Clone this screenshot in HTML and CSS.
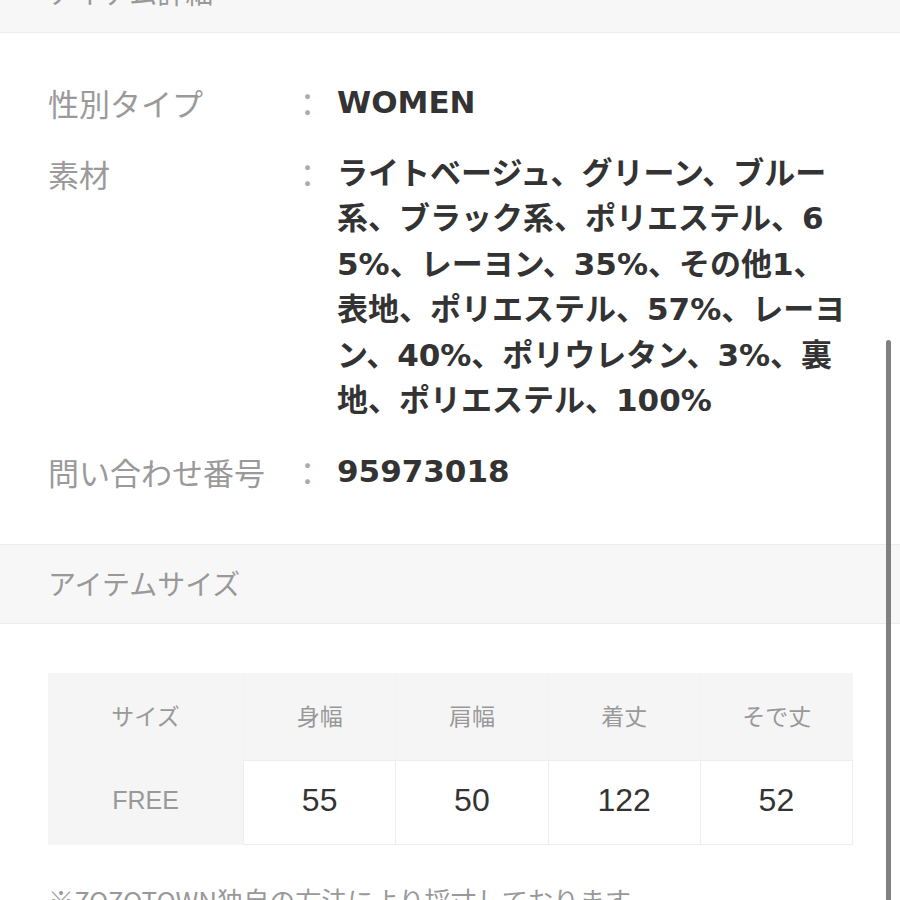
FILE: index.html
```html
<!DOCTYPE html>
<html lang="ja">
<head>
  <meta charset="UTF-8">
  <title>アイテム詳細</title>
  <link rel="stylesheet" href="styles.css">
</head>
<body>
  <div class="section-head section-head-top">アイテム詳細</div>

  <div class="spec-list">
    <div class="spec-row">
      <div class="spec-label">性別タイプ</div>
      <div class="spec-colon">：</div>
      <div class="spec-value">WOMEN</div>
    </div>
    <div class="spec-row">
      <div class="spec-label">素材</div>
      <div class="spec-colon">：</div>
      <div class="spec-value">ライトベージュ、グリーン、ブルー<br>系、ブラック系、ポリエステル、6<br>5%、レーヨン、35%、その他1、<br>表地、ポリエステル、57%、レーヨ<br>ン、40%、ポリウレタン、3%、裏<br>地、ポリエステル、100%</div>
    </div>
    <div class="spec-row">
      <div class="spec-label">問い合わせ番号</div>
      <div class="spec-colon">：</div>
      <div class="spec-value">95973018</div>
    </div>
  </div>

  <div class="section-head">アイテムサイズ</div>

  <div class="size-wrap">
    <table class="size-table">
      <thead>
        <tr>
          <th class="size-name">サイズ</th>
          <th>身幅</th>
          <th>肩幅</th>
          <th>着丈</th>
          <th>そで丈</th>
        </tr>
      </thead>
      <tbody>
        <tr>
          <th class="size-name">FREE</th>
          <td>55</td>
          <td>50</td>
          <td>122</td>
          <td>52</td>
        </tr>
      </tbody>
    </table>

    <p class="size-note">※ZOZOTOWN独自の方法により採寸しております。</p>
  </div>

  <!-- scroll indicator drawn over the page -->
  <div class="scroll-thumb"></div>
</body>
</html>
```

FILE: styles.css
```css
body {
  margin: 0;
  font-family: "Noto Sans CJK JP", sans-serif;
  color: #333;
  background: #fff;
  overflow: hidden;
}

/* grey section bars */
.section-head {
  box-sizing: border-box;
  height: 80px;
  display: flex;
  align-items: center;
  padding-left: 48px;
  padding-bottom: 2px;
  background: #f7f7f7;
  border-top: 1px solid #ececec;
  border-bottom: 1px solid #ececec;
  font-size: 28px;
  color: #999;
}

.section-head-top {
  margin-top: -47px;
}

/* item detail rows */
.spec-list {
  display: flex;
  flex-direction: column;
  gap: 25px;
  padding: 47px 47px 50px 48px;
}

.spec-row {
  display: grid;
  grid-template-columns: 244px 45px 1fr;
  line-height: 45.5px;
  font-size: 31px;
}

.spec-label {
  color: #9a9a9a;
  white-space: nowrap;
}

.spec-colon {
  color: #aaa;
}

.spec-value {
  font-family: "DejaVu Sans", "Noto Sans CJK JP", sans-serif;
  font-weight: bold;
  color: #333;
  white-space: nowrap;
}

/* size table */
.size-wrap {
  padding: 49px 47px 0 48px;
}

.size-table {
  width: 100%;
  border-collapse: collapse;
  table-layout: fixed;
}

.size-table th,
.size-table td {
  text-align: center;
  padding: 0 0 4px;
}

.size-table thead th {
  height: 83px;
  background: #f5f5f5;
  border-left: 1px solid #f1f1f1;
  font-size: 23px;
  font-weight: normal;
  color: #999;
}

.size-table thead th:first-child {
  border-left: none;
}

.size-table .size-name {
  width: 195px;
}

.size-table tbody th {
  height: 80px;
  background: #f5f5f5;
  font-family: "Liberation Sans", sans-serif;
  font-size: 25px;
  font-weight: normal;
  color: #999;
}

.size-table td {
  background: #fff;
  border: 1px solid #eee;
  font-family: "Liberation Sans", sans-serif;
  font-size: 32px;
  color: #333;
}

.size-note {
  margin: 35px 0 0;
  line-height: 40px;
  font-size: 26px;
  color: #999;
  white-space: nowrap;
}

.scroll-thumb {
  position: fixed;
  top: 340px;
  right: 9px;
  bottom: -4px;
  width: 5px;
  border-radius: 3px;
  background: #808080;
}
```
